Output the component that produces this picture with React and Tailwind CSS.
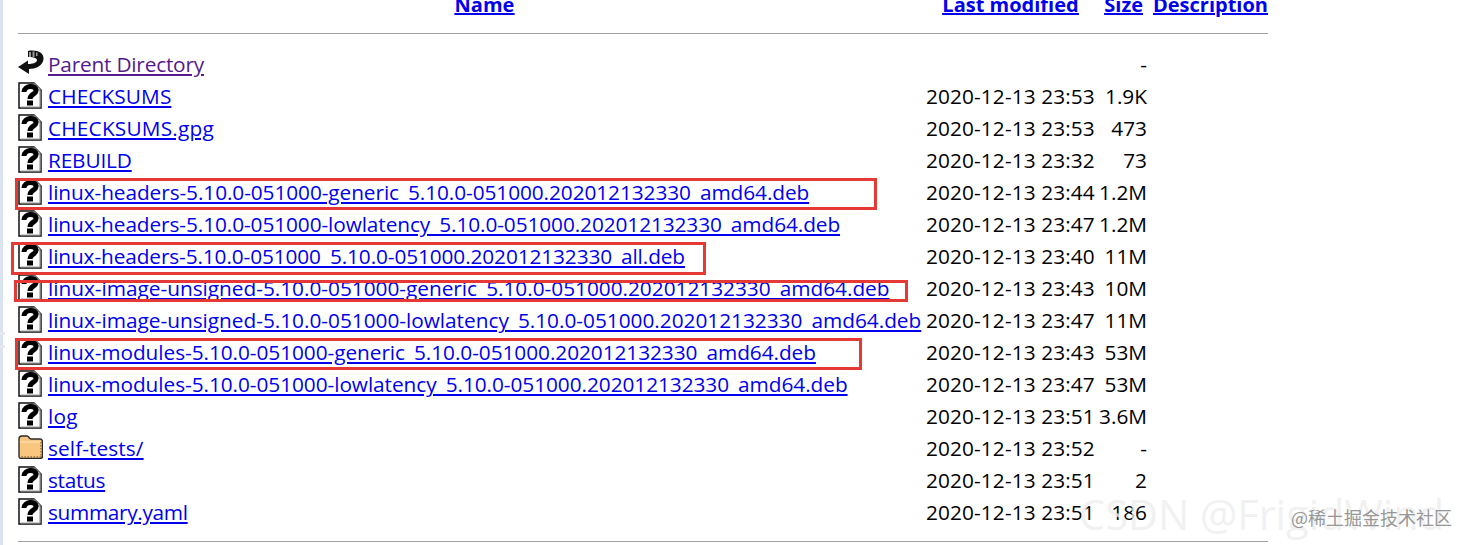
const files = [
  ['back', 'Parent Directory', '', '-', 'tracking-[-0.2px]'],
  ['file', 'CHECKSUMS', '2020-12-13 23:53', '1.9K', 'tracking-[0.1px]'],
  ['file', 'CHECKSUMS.gpg', '2020-12-13 23:53', '473', 'tracking-[0.2px]'],
  ['file', 'REBUILD', '2020-12-13 23:32', '73', 'tracking-[-0.15px]'],
  ['file', 'linux-headers-5.10.0-051000-generic_5.10.0-051000.202012132330_amd64.deb', '2020-12-13 23:44', '1.2M', 'tracking-[-0.07px]'],
  ['file', 'linux-headers-5.10.0-051000-lowlatency_5.10.0-051000.202012132330_amd64.deb', '2020-12-13 23:47', '1.2M', 'tracking-[-0.08px]'],
  ['file', 'linux-headers-5.10.0-051000_5.10.0-051000.202012132330_all.deb', '2020-12-13 23:40', '11M', 'tracking-[-0.1px]'],
  ['file', 'linux-image-unsigned-5.10.0-051000-generic_5.10.0-051000.202012132330_amd64.deb', '2020-12-13 23:43', '10M', 'tracking-[-0.01px]'],
  ['file', 'linux-image-unsigned-5.10.0-051000-lowlatency_5.10.0-051000.202012132330_amd64.deb', '2020-12-13 23:47', '11M', 'tracking-[-0.01px]'],
  ['file', 'linux-modules-5.10.0-051000-generic_5.10.0-051000.202012132330_amd64.deb', '2020-12-13 23:43', '53M', 'tracking-[-0.05px]'],
  ['file', 'linux-modules-5.10.0-051000-lowlatency_5.10.0-051000.202012132330_amd64.deb', '2020-12-13 23:47', '53M', 'tracking-[-0.05px]'],
  ['file', 'log', '2020-12-13 23:51', '3.6M', 'tracking-[0.3px]'],
  ['folder', 'self-tests/', '2020-12-13 23:52', '-', 'tracking-[0.1px]'],
  ['file', 'status', '2020-12-13 23:51', '2', 'tracking-[-0.3px]'],
  ['file', 'summary.yaml', '2020-12-13 23:51', '186', 'tracking-[-0.33px]'],
];

const UnknownIcon = () => (
  <svg width="24" height="27" viewBox="0 0 24 27" className="mt-px">
    <path d="M1 1H16L23 8V26H1Z" fill="#fff" stroke="#111" strokeWidth="1.5" />
    <path d="M16 1V8H23" fill="#ddd" stroke="#666" strokeWidth="1" />
    <path d="M3 25H22V9" fill="none" stroke="#999" strokeWidth="1.2" />
    <path d="M6 10C6 3.500 18 2.500 18 8.500C18 12.500 12 12 12 17" fill="none" stroke="#000" strokeWidth="5" />
    <rect x="9" y="18.500" width="6" height="5" fill="#000" />
  </svg>
);

const BackIcon = () => (
  <svg width="26" height="26" viewBox="0 0 26 26">
    <path d="M10 2C18 0.500 26 3 25.500 10C25 17 17 20 11 20V25L0 18L10 11.500V15C14 15 19 14 19 11C19 8.500 13 8 10 8Z" fill="#111" />
    <path d="M11 3H13V8H11ZM14.500 2.500H16.500V8H14.500ZM18 3.500H19.500V7H18Z" fill="#9a9a9a" />
  </svg>
);

const FolderIcon = () => (
  <svg width="25" height="24" viewBox="0 0 25 24" className="mt-[2px]">
    <path d="M1 4C1 2 2 1 4 1H9C11 1 11 4 13 4H22C24 4 24.500 5 24.500 7V21C24.500 23 23 23.500 22 23.500H3C1.500 23.500 1 22 1 21Z" fill="#f9c67f" stroke="#2a2a2a" strokeWidth="1.4" />
    <path d="M2 7H23" stroke="#fde3b8" strokeWidth="1" />
    <path d="M23 7V22H3" fill="none" stroke="#8a6a3a" strokeWidth="1.4" strokeDasharray="1.5 1.5" />
  </svg>
);

const icons = { back: BackIcon, file: UnknownIcon, folder: FolderIcon };

const rowClass = 'grid grid-cols-[30px_878px_169px_52px_1fr] h-8 items-center';

function Row({ type, name, date, size, fit }) {
  const Icon = icons[type];
  return (
    <div className={rowClass}>
      <div className="flex h-8 items-start"><Icon /></div>
      <a href="#" className={`${fit} whitespace-nowrap underline ${type === 'back' ? 'text-[#551a8b]' : 'text-[#0000ee]'}`}>{name}</a>
      <span className="tracking-[0.12px]">{date}</span>
      <span className="text-right">{size}</span>
      <span />
    </div>
  );
}

export default function App() {
  return (
    <div className="relative h-[545px] w-[1469px] overflow-hidden bg-white font-['Open_Sans','Noto_Sans',sans-serif] text-[20.8px] text-black">
      <div className="absolute inset-y-0 left-0 w-[3px] bg-[#dbe3f1]" />
      <div className="absolute left-0 top-[332px] h-[16px] w-[5px] border-y-[3px] border-[#e6e8ec]" />
      <div className="-mt-[11px] ml-[18px] w-[1250px]">
        <div className={`${rowClass} text-[20px] font-bold text-[#0000ee] underline`}>
          <span />
          <a href="#" className="justify-self-center pr-[5px]">Name</a>
          <a href="#" className="justify-self-center">Last modified</a>
          <a href="#" className="justify-self-end pr-1">Size</a>
          <a href="#" className="justify-self-end">Description</a>
        </div>
        <hr className="mb-[15px] mt-3 border-t border-[#a0a0a0]" />
        {files.map(([type, name, date, size, fit]) => (
          <Row key={name} type={type} name={name} date={date} size={size} fit={fit} />
        ))}
        <hr className="mt-3 border-t border-[#a0a0a0]" />
      </div>

      {/* hand-drawn red highlights on top of the listing */}
      <div className="absolute left-[15px] top-[178px] h-[32px] w-[862px] border-[3px] border-[#e53935]" />
      <div className="absolute left-[11px] top-[242px] h-[33px] w-[695px] border-[3px] border-[#e53935]" />
      <div className="absolute left-[14px] top-[280px] h-[22px] w-[894px] border-[3px] border-[#e53935]" />
      <div className="absolute left-[15px] top-[338px] h-[32px] w-[847px] border-[3px] border-[#e53935]" />

      {/* watermarks */}
      <div className="absolute left-[1079px] top-[483px] whitespace-nowrap text-[41.5px] text-[#eeeeee]/80">CSDN @FrigidWind</div>
      <div className="absolute left-[1291px] top-[504px] whitespace-nowrap font-['Noto_Sans_CJK_SC',sans-serif] text-[18px] text-[#979797]">@稀土掘金技术社区</div>
    </div>
  );
}
